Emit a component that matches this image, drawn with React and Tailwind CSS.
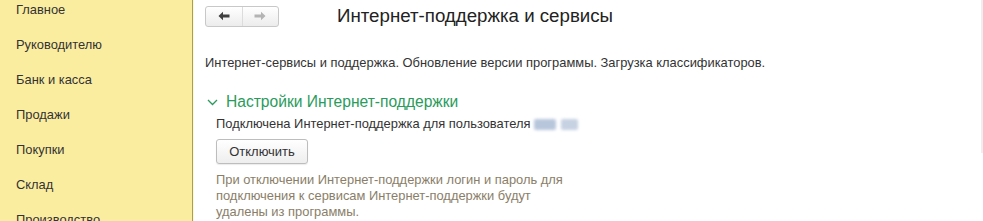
const menu = ['Главное', 'Руководителю', 'Банк и касса', 'Продажи', 'Покупки', 'Склад', 'Производство'];

function Arrow({ dir, color }) {
  return (
    <svg width="12" height="10" viewBox="0 0 12 10">
      {dir === 'left' ? (
        <path d="M0.5 5 L5 0.8 L5 3.6 L11.5 3.6 L11.5 6.4 L5 6.4 L5 9.2 Z" fill={color} />
      ) : (
        <path d="M11.5 5 L7 0.8 L7 3.6 L0.5 3.6 L0.5 6.4 L7 6.4 L7 9.2 Z" fill={color} />
      )}
    </svg>
  );
}

export default function App() {
  return (
    <div className="flex h-[221px] w-[983px] overflow-hidden bg-white font-['Liberation_Sans',Arial,sans-serif] text-[12.9px]">
      {/* sidebar */}
      <div className="w-[193px] shrink-0 border-r border-[#a8a050] bg-[#fbeda0]">
        <ul className="pt-[2px]">
          {menu.map((m) => (
            <li key={m} className="h-[35px] pl-4 leading-[16px] text-[#333333]">
              {m}
            </li>
          ))}
        </ul>
      </div>

      {/* content */}
      <div className="relative flex-1 border-l border-[#fdf7dc] pl-[11px]">
        <div className="flex items-center pt-[5px]">
          <div className="flex h-[21px] w-[74px] overflow-hidden rounded-[3px] border border-[#c8c8c8] bg-gradient-to-b from-white to-[#ececec]">
            <div className="flex w-[37px] items-center justify-center border-r border-[#dcdcdc]">
              <Arrow dir="left" color="#404040" />
            </div>
            <div className="flex w-[36px] items-center justify-center">
              <Arrow dir="right" color="#b4b4b4" />
            </div>
          </div>
          <h1 className="ml-[58px] text-[18.7px] leading-[22px] text-[#222222]">Интернет-поддержка и сервисы</h1>
        </div>

        <p className="mt-[28px] leading-[16px] text-[#333333]">
          Интернет-сервисы и поддержка. Обновление версии программы. Загрузка классификаторов.
        </p>

        <div className="mt-[22px] flex items-center gap-[8px] pl-[2px]">
          <svg width="11" height="7" viewBox="0 0 11 7">
            <path d="M1 1 L5.5 5.5 L10 1" fill="none" stroke="#2a9b5c" strokeWidth="1.3" />
          </svg>
          <span className="text-[15.6px] leading-[18px] text-[#2a9b5c]">Настройки Интернет-поддержки</span>
        </div>

        <div className="pl-[11px]">
          <p className="mt-[5px] flex items-center leading-[16px] text-[#333333]">
            Подключена Интернет-поддержка для пользователя
            <span className="ml-[4px] inline-flex h-[11px] w-[44px] gap-[5px] blur-[1.5px]">
              <span className="h-full w-[22px] rounded-[2px] bg-[#b8c6dc]" />
              <span className="h-full w-[17px] rounded-[2px] bg-[#c6d1e2]" />
            </span>
          </p>
          <button className="mt-[7px] h-[25px] w-[92px] rounded-[3px] border border-[#bdbdbd] bg-gradient-to-b from-white to-[#eeeeee] text-[13px] text-[#333333] shadow-[0_1px_1px_rgba(0,0,0,0.08)]">
            Отключить
          </button>
          <p className="mt-[8px] w-[360px] leading-[16px] text-[#8a7e68]">
            При отключении Интернет-поддержки логин и пароль для подключения к сервисам Интернет-поддержки будут удалены из программы.
          </p>
        </div>

        <div className="absolute right-0 top-0 h-[153px] w-[2px] bg-[#eeeeee]" />
      </div>
    </div>
  );
}
